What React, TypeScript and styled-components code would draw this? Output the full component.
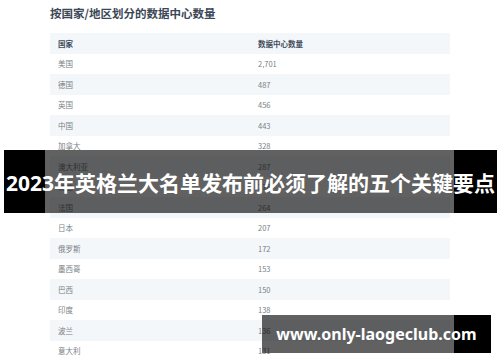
import React from "react";
import styled, { createGlobalStyle } from "styled-components";

const GlobalStyle = createGlobalStyle`
  html, body {
    margin: 0;
    padding: 0;
    background: #ffffff;
  }
  body {
    font-family: "Noto Sans", "Noto Sans CJK SC", sans-serif;
  }
`;

const Page = styled.div`
  position: relative;
  width: 500px;
  height: 362px;
  overflow: hidden;
  background: #ffffff;
`;

const Sheet = styled.div`
  padding: 5px 50px 0 50px;
  display: flex;
  flex-direction: column;
`;

const Heading = styled.h2`
  margin: 0;
  height: 28px;
  font-family: "Noto Sans CJK SC", sans-serif;
  font-size: 11.5px;
  line-height: 16px;
  font-weight: 700;
  color: #3b4756;
`;

const Table = styled.div`
  display: flex;
  flex-direction: column;
`;

const Row = styled.div<{ $shaded: boolean; $head?: boolean }>`
  display: grid;
  grid-template-columns: 200px 200px;
  height: 20.5px;
  align-items: center;
  background: ${(p) => (p.$shaded ? "#f3f7fa" : "#ffffff")};
  font-family: "Noto Sans CJK SC", sans-serif;
  font-size: 7.5px;
  font-weight: ${(p) => (p.$head ? 700 : 400)};
  color: ${(p) => (p.$head ? "#3f4b5a" : "#7a7f86")};
`;

const Cell = styled.div`
  padding-left: 8px;
`;

const Banner = styled.div`
  position: absolute;
  left: 4px;
  right: 3px;
  top: 150px;
  height: 63px;
  display: flex;
  align-items: center;
  justify-content: center;
  background: linear-gradient(
    to right,
    #000 41px,
    rgba(0, 0, 0, 0.62) 41px,
    rgba(0, 0, 0, 0.62) calc(100% - 43px),
    #000 calc(100% - 43px)
  );
  color: #ffffff;
  font-family: "Noto Sans", "Noto Sans CJK SC", sans-serif;
  font-size: 21px;
  font-weight: 700;
  white-space: nowrap;
  letter-spacing: 0;
`;

const Stamp = styled.div`
  position: absolute;
  left: 262px;
  width: 229px;
  top: 315px;
  height: 38px;
  display: flex;
  align-items: center;
  justify-content: center;
  background: linear-gradient(
    to right,
    rgba(0, 0, 0, 0.62) 192px,
    #000 192px
  );
  color: #ffffff;
  font-family: "Noto Sans", sans-serif;
  font-size: 16px;
  font-weight: 700;
  white-space: nowrap;
`;

const data: [string, string][] = [
  ["美国", "2,701"],
  ["德国", "487"],
  ["英国", "456"],
  ["中国", "443"],
  ["加拿大", "328"],
  ["澳大利亚", "287"],
  ["荷兰", "276"],
  ["法国", "264"],
  ["日本", "207"],
  ["俄罗斯", "172"],
  ["墨西哥", "153"],
  ["巴西", "150"],
  ["印度", "138"],
  ["波兰", "136"],
  ["意大利", "131"],
];

export default function App() {
  return (
    <Page>
      <GlobalStyle />
      <Sheet>
        <Heading>按国家/地区划分的数据中心数量</Heading>
        <Table>
          <Row $shaded $head>
            <Cell>国家</Cell>
            <Cell>数据中心数量</Cell>
          </Row>
          {data.map(([country, count], i) => (
            <Row key={country} $shaded={i % 2 === 1}>
              <Cell>{country}</Cell>
              <Cell>{count}</Cell>
            </Row>
          ))}
        </Table>
      </Sheet>
      <Banner>2023年英格兰大名单发布前必须了解的五个关键要点</Banner>
      <Stamp>www.only-laogeclub.com</Stamp>
    </Page>
  );
}
